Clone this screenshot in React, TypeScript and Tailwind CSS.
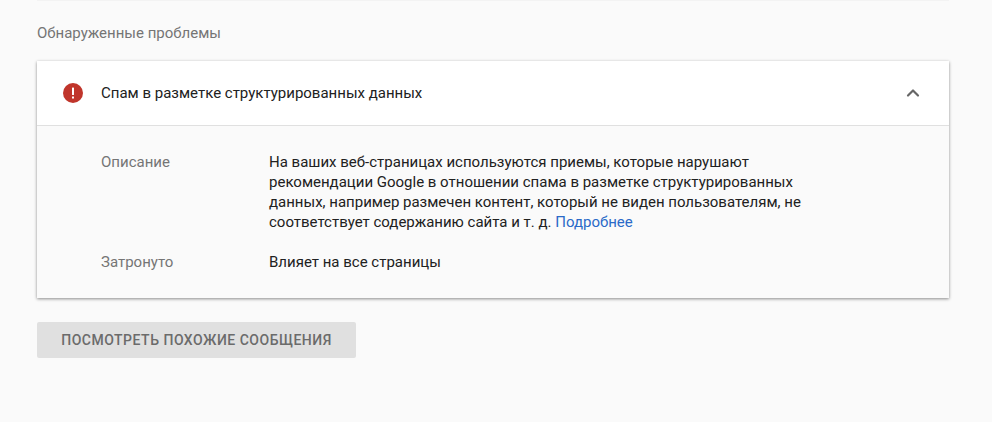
import { ChevronUp } from 'lucide-react';

const bodyText =
  'На ваших веб-страницах используются приемы, которые нарушают рекомендации Google в отношении спама в разметке структурированных данных, например размечен контент, который не виден пользователям, не соответствует содержанию сайта и т. д.';

function ErrorIcon() {
  return (
    <svg width="24" height="24" viewBox="0 0 24 24" className="shrink-0">
      <circle cx="12" cy="12" r="10" fill="#c0352b" />
      <rect x="11" y="6.5" width="2" height="7.5" rx="0.6" fill="#fff" />
      <rect x="11" y="15.5" width="2" height="2" fill="#fff" />
    </svg>
  );
}

export default function App() {
  return (
    <div className="h-[422px] w-[992px] overflow-hidden bg-[#fafafa] px-[37px] font-['Roboto',sans-serif] text-[15px]">
      <div className="h-px w-[912px] bg-[#f3f3f3]" />
      <h2 className="mt-[22px] text-[15px] leading-[20px] font-normal text-[#757575]">Обнаруженные проблемы</h2>

      <section className="mt-[18px] w-[912px] bg-[#fafafa] shadow-[0_1px_3px_rgba(0,0,0,0.45)]">
        <div className="flex h-[65px] items-center border-b border-[#e0e0e0] bg-white pr-[26px] pl-[24px]">
          <ErrorIcon />
          <span className="ml-[16px] flex-1 text-[#212121]">Спам в разметке структурированных данных</span>
          <ChevronUp size={20} className="text-[#666]" strokeWidth={2.6} />
        </div>

        <div className="px-[64px] pt-[26px] pb-[26px] leading-[20px]">
          <div className="flex">
            <div className="w-[168px] shrink-0 text-[#757575]">Описание</div>
            <p className="w-[540px] text-[#212121]">
              {bodyText} <a className="text-[#2a6ac8]">Подробнее</a>
            </p>
          </div>
          <div className="mt-[20px] flex">
            <div className="w-[168px] shrink-0 text-[#757575]">Затронуто</div>
            <p className="text-[#212121]">Влияет на все страницы</p>
          </div>
        </div>
      </section>

      <button className="mt-[24px] flex h-[36px] w-[319px] items-center justify-center rounded-[2px] bg-[#e0e0e0] text-[14px] font-medium tracking-[0.5px] text-[#6b6b6b]">
        ПОСМОТРЕТЬ ПОХОЖИЕ СООБЩЕНИЯ
      </button>
    </div>
  );
}
